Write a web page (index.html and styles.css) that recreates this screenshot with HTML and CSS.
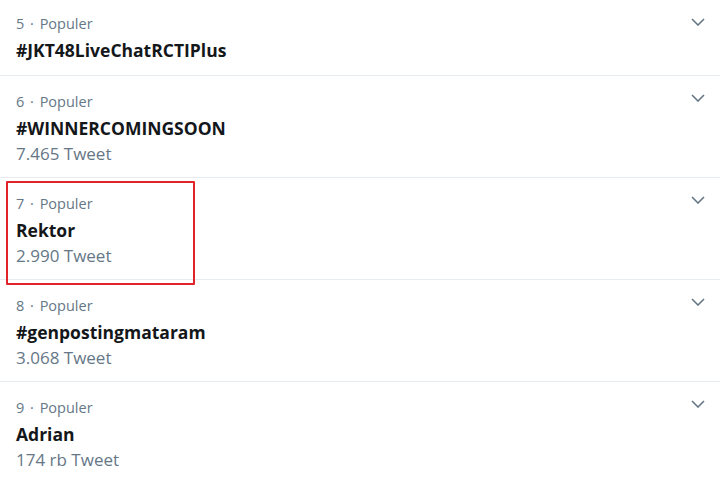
FILE: index.html
```html
<!DOCTYPE html>
<html>
<head>
<meta charset="utf-8">
<link rel="stylesheet" href="styles.css">
</head>
<body>
<div class="list">
  <div class="row first">
    <div class="info">
      <div class="meta">5 · Populer</div>
      <div class="title">#JKT48LiveChatRCTIPlus</div>
    </div>
    <svg class="chev" viewBox="0 0 14 8" width="14" height="8"><path d="M1 1 L7 7 L13 1" fill="none" stroke="#657786" stroke-width="1.6"/></svg>
  </div>
  <div class="row">
    <div class="info">
      <div class="meta">6 · Populer</div>
      <div class="title">#WINNERCOMINGSOON</div>
      <div class="count">7.465 Tweet</div>
    </div>
    <svg class="chev" viewBox="0 0 14 8" width="14" height="8"><path d="M1 1 L7 7 L13 1" fill="none" stroke="#657786" stroke-width="1.6"/></svg>
  </div>
  <div class="row">
    <div class="info boxed">
      <div class="meta">7 · Populer</div>
      <div class="title">Rektor</div>
      <div class="count">2.990 Tweet</div>
    </div>
    <svg class="chev" viewBox="0 0 14 8" width="14" height="8"><path d="M1 1 L7 7 L13 1" fill="none" stroke="#657786" stroke-width="1.6"/></svg>
  </div>
  <div class="row">
    <div class="info">
      <div class="meta">8 · Populer</div>
      <div class="title">#genpostingmataram</div>
      <div class="count">3.068 Tweet</div>
    </div>
    <svg class="chev" viewBox="0 0 14 8" width="14" height="8"><path d="M1 1 L7 7 L13 1" fill="none" stroke="#657786" stroke-width="1.6"/></svg>
  </div>
  <div class="row">
    <div class="info">
      <div class="meta">9 · Populer</div>
      <div class="title">Adrian</div>
      <div class="count">174 rb Tweet</div>
    </div>
    <svg class="chev" viewBox="0 0 14 8" width="14" height="8"><path d="M1 1 L7 7 L13 1" fill="none" stroke="#657786" stroke-width="1.6"/></svg>
  </div>
</div>
</body>
</html>
```

FILE: styles.css
```css
html, body {
  margin: 0;
  padding: 0;
  background: #ffffff;
}
body {
  font-family: "Open Sans", "Noto Sans", "Liberation Sans", sans-serif;
  width: 720px;
  height: 482px;
  overflow: hidden;
}
.list {
  display: flex;
  flex-direction: column;
}
.row {
  display: flex;
  justify-content: space-between;
  align-items: flex-start;
  height: 102px;
  border-bottom: 1px solid #e6ecf0;
  padding: 0 15px 0 16px;
  box-sizing: border-box;
  flex-shrink: 0;
}
.row.first {
  height: 76px;
}
.info {
  display: flex;
  flex-direction: column;
  padding-top: 11px;
}
.row:not(.first) .info {
  padding-top: 13px;
}
.info.boxed {
  position: relative;
}
.info.boxed::before {
  content: "";
  position: absolute;
  left: -10px;
  top: 3px;
  width: 189px;
  height: 104px;
  border: 2px solid #e0242a;
  border-radius: 1px;
  box-sizing: border-box;
}
.meta {
  font-size: 14.5px;
  line-height: 26px;
  color: #657786;
  word-spacing: 2px;
}
.title {
  font-size: 17.5px;
  font-weight: 700;
  line-height: 26px;
  color: #14171a;
}
.count {
  font-size: 17px;
  line-height: 26px;
  color: #657786;
}
.chev {
  margin-top: 18px;
  margin-right: 0;
}
```
